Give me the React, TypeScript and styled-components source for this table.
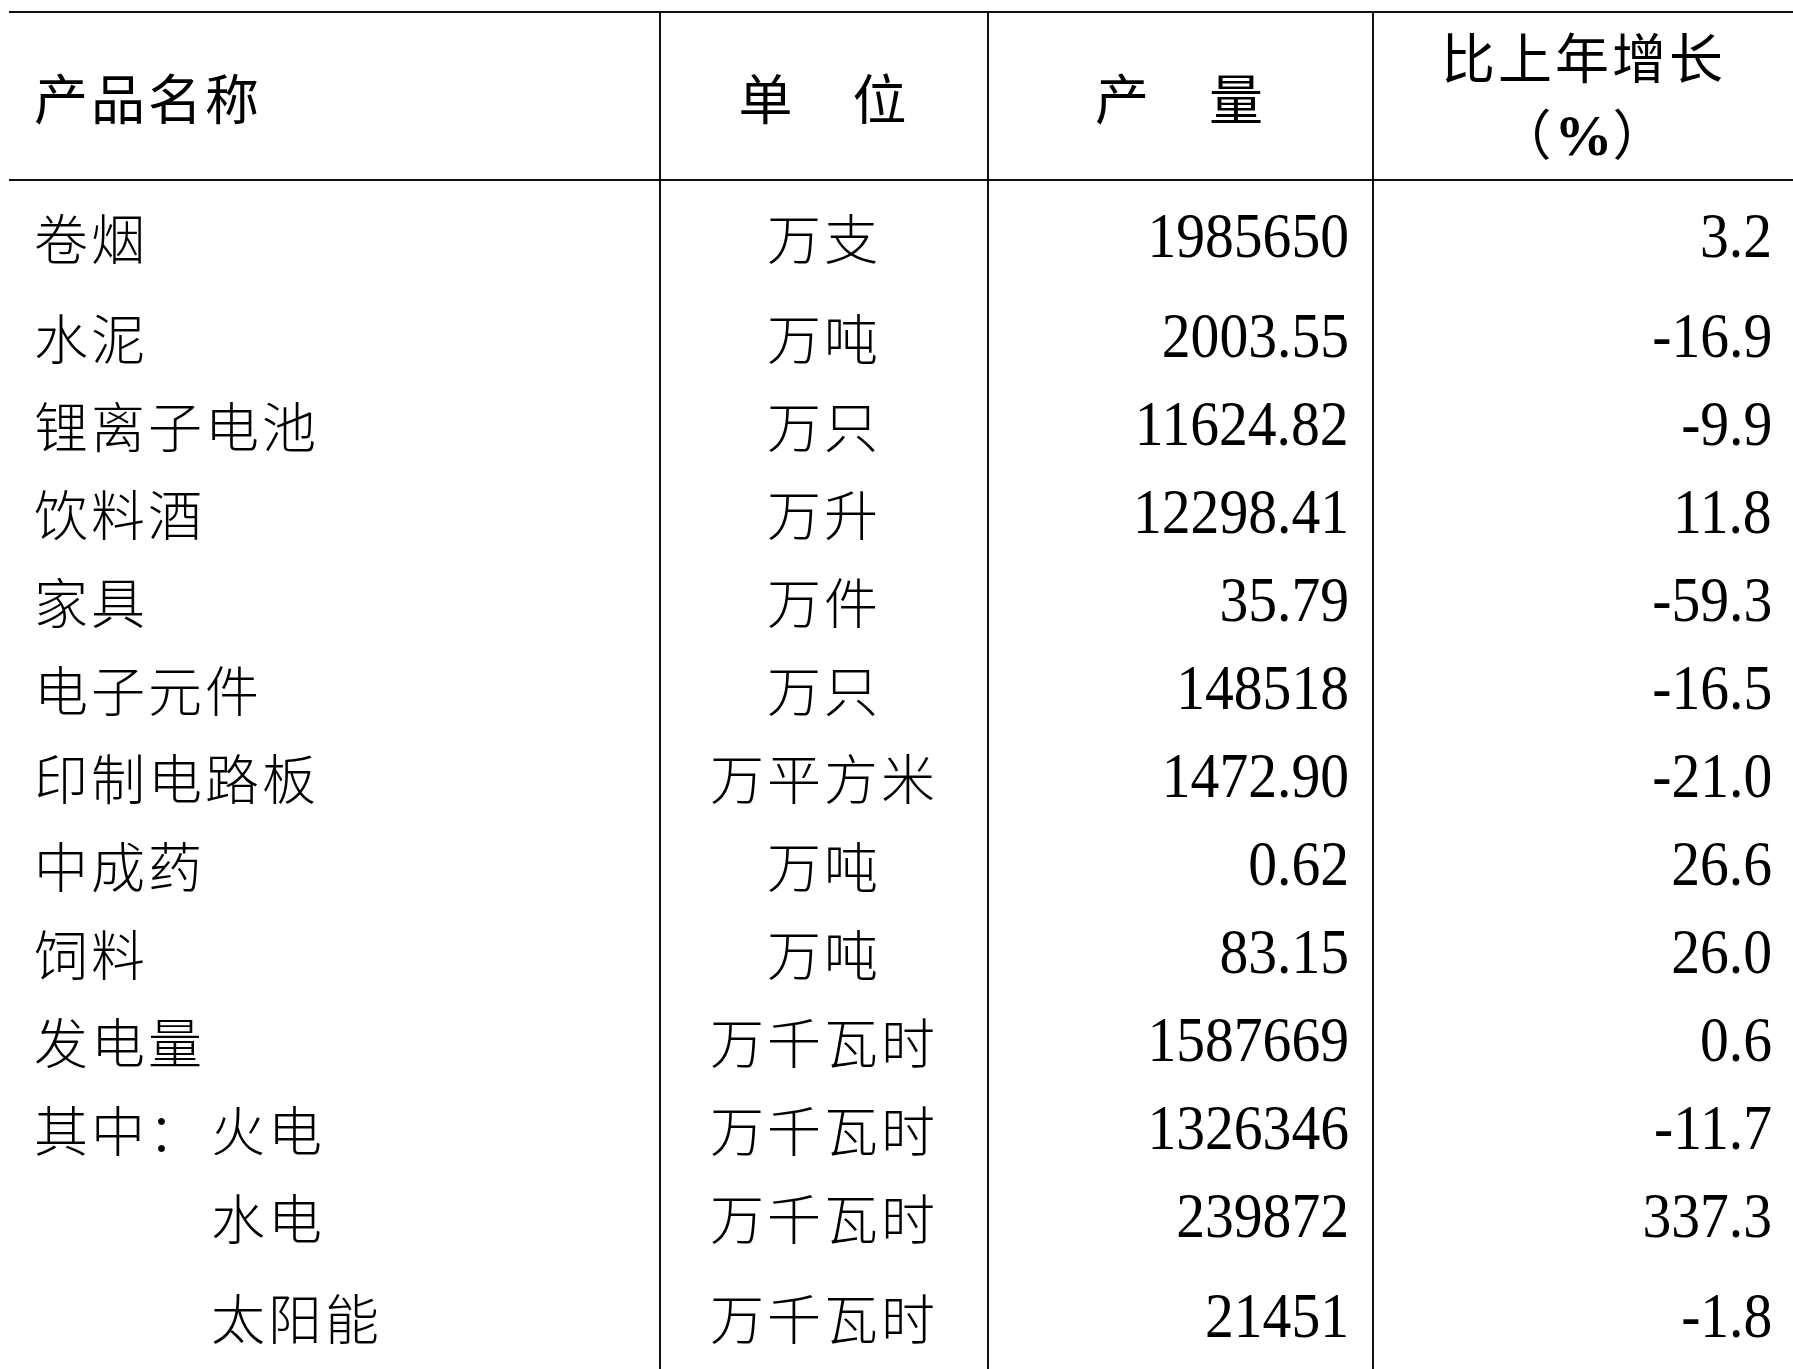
import React from 'react';
import styled, { createGlobalStyle } from 'styled-components';

const GlobalStyle = createGlobalStyle`
  html, body {
    margin: 0;
    padding: 0;
    background: #ffffff;
    overflow: hidden;
  }
`;

const COLS = '652px 328px 385px 1fr';
const CJK = `"Noto Sans CJK SC", "Noto Sans", sans-serif`;
const NUM = `"Liberation Serif", "Times New Roman", serif`;

type Item = {
  name: string;
  unit: string;
  output: string;
  growth: string;
  lead?: string;
  indent?: boolean;
  extra?: number;
  tail?: number;
};

const rows: Item[] = [
  { name: '卷烟', unit: '万支', output: '1985650', growth: '3.2', extra: 11 },
  { name: '水泥', unit: '万吨', output: '2003.55', growth: '-16.9', extra: 12 },
  { name: '锂离子电池', unit: '万只', output: '11624.82', growth: '-9.9' },
  { name: '饮料酒', unit: '万升', output: '12298.41', growth: '11.8' },
  { name: '家具', unit: '万件', output: '35.79', growth: '-59.3' },
  { name: '电子元件', unit: '万只', output: '148518', growth: '-16.5' },
  { name: '印制电路板', unit: '万平方米', output: '1472.90', growth: '-21.0' },
  { name: '中成药', unit: '万吨', output: '0.62', growth: '26.6' },
  { name: '饲料', unit: '万吨', output: '83.15', growth: '26.0' },
  { name: '发电量', unit: '万千瓦时', output: '1587669', growth: '0.6' },
  { name: '火电', lead: '其中：', unit: '万千瓦时', output: '1326346', growth: '-11.7' },
  { name: '水电', indent: true, unit: '万千瓦时', output: '239872', growth: '337.3' },
  { name: '太阳能', indent: true, unit: '万千瓦时', output: '21451', growth: '-1.8', extra: 12, tail: 20 },
];

export default function App() {
  return (
    <>
      <GlobalStyle />
      <Sheet>
        <HeadRow>
          <HeadCell align="left">产品名称</HeadCell>
          <HeadCell align="center">单　位</HeadCell>
          <HeadCell align="center">产　量</HeadCell>
          <HeadCell align="center" last>
            <Stack>
              <span>比上年增长</span>
              <span>
                （<Pct>%</Pct>）
              </span>
            </Stack>
          </HeadCell>
        </HeadRow>
        {rows.map((r, i) => (
          <BodyRow key={i}>
            <NameCell extra={r.extra} tail={r.tail} indent={r.indent}>
              {r.lead && <Lead>{r.lead}</Lead>}
              {r.name}
            </NameCell>
            <UnitCell extra={r.extra} tail={r.tail}>
              {r.unit}
            </UnitCell>
            <NumCell extra={r.extra} tail={r.tail}>
              <Num>{r.output}</Num>
            </NumCell>
            <NumCell extra={r.extra} tail={r.tail} last>
              <Num>{r.growth}</Num>
            </NumCell>
          </BodyRow>
        ))}
      </Sheet>
    </>
  );
}

const Sheet = styled.div`
  margin: 11px 0 0 9px;
  color: #000;
`;

const HeadRow = styled.div`
  display: grid;
  grid-template-columns: ${COLS};
  border-top: 2px solid #111;
  border-bottom: 2px solid #111;
  height: 166px;
`;

const HeadCell = styled.div<{ align: 'left' | 'center'; last?: boolean }>`
  display: flex;
  align-items: center;
  justify-content: ${(p) => (p.align === 'left' ? 'flex-start' : 'center')};
  padding-left: ${(p) => (p.align === 'left' ? '25px' : '0')};
  border-right: ${(p) => (p.last ? 'none' : '2px solid #111')};
  font-family: ${CJK};
  font-size: 54px;
  font-weight: 400;
  letter-spacing: 3px;
  white-space: nowrap;
`;

const Stack = styled.div`
  display: flex;
  flex-direction: column;
  align-items: center;
  line-height: 76px;
`;

const Pct = styled.span`
  font-family: ${NUM};
  font-weight: 700;
  font-size: 58px;
  letter-spacing: 0;
`;

const BodyRow = styled.div`
  display: grid;
  grid-template-columns: ${COLS};
`;

const Cell = styled.div<{ extra?: number; tail?: number; last?: boolean }>`
  display: flex;
  align-items: center;
  height: 88px;
  padding-top: ${(p) => p.extra ?? 0}px;
  padding-bottom: ${(p) => p.tail ?? 0}px;
  border-right: ${(p) => (p.last ? 'none' : '2px solid #111')};
  white-space: nowrap;
`;

const NameCell = styled(Cell)<{ indent?: boolean }>`
  padding-left: ${(p) => (p.indent ? 202 : 25)}px;
  font-family: ${CJK};
  font-size: 54px;
  font-weight: 300;
  letter-spacing: 3px;
`;

const Lead = styled.span`
  display: inline-block;
  width: 177px;
`;

const UnitCell = styled(Cell)`
  justify-content: center;
  font-family: ${CJK};
  font-size: 54px;
  font-weight: 300;
  letter-spacing: 3px;
`;

const NumCell = styled(Cell)`
  justify-content: flex-end;
  padding-right: ${(p) => (p.last ? 21 : 23)}px;
`;

const Num = styled.span`
  display: inline-block;
  font-family: ${NUM};
  font-size: 64px;
  line-height: 1;
  transform: scaleX(0.9);
  transform-origin: right center;
`;
